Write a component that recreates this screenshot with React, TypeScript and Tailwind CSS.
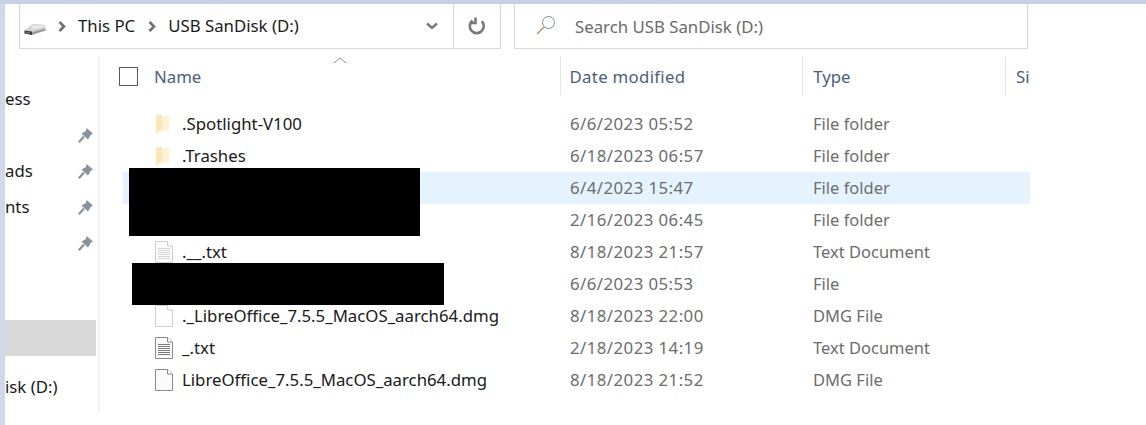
const DriveIcon = () => (
    <svg width="22" height="12" viewBox="0 0 22 12" className="shrink-0">
        <path d="M0.5 7.5 L7 2 Q8 1 10 1 L19 1.5 Q21.5 2 21.5 4 L21.5 7 L6 11.5 L0.5 10.5 Z" fill="#d4d4d4" />
        <path d="M7 3 L19 2.5 L20 4 L9 6 Z" fill="#ececec" />
        <path d="M8 9 L21.5 5.5 L21.5 7.5 L8 12 Z" fill="#9a9a9a" />
        <path d="M0.5 7.5 L8 8.5 L8 12 L0.5 10.5 Z" fill="#3f3f3f" />
        <path d="M2.5 9 L5.5 9.5 L5.5 10.5 L2.5 10 Z" fill="#6fa86f" />
    </svg>
);

const Crumb = () => (
    <svg width="8" height="11" viewBox="0 0 8 11" className="shrink-0">
        <path d="M1.5 1 L6 5.5 L1.5 10" fill="none" stroke="#707070" strokeWidth="2.6" />
    </svg>
);

const PinIcon = () => (
    <svg width="15" height="15" viewBox="0 0 15 15">
        <path d="M8.5 0 L15 5.5 L13 6.5 L10 11.5 L3.5 5.5 L8 3 Z" fill="#87929c" />
        <path d="M6 8.5 L0.8 14.2" stroke="#87929c" strokeWidth="2.2" />
    </svg>
);

const FolderIcon = () => (
    <svg width="15" height="21" viewBox="0 0 15 21">
        <path d="M1 1 L7 1 L7 16 L1 20 Z" fill="#f9e9b6" />
        <path d="M7 2 L14 2 L14 17 L1 17 L1 16 L7 16 Z" fill="#fdf3d2" />
    </svg>
);

const DocIcon = ({ dark, lines }: { dark: boolean; lines: boolean }) => {
    const stroke = dark ? '#8a8a8a' : '#d0d0d0';
    return (
        <svg width="18" height="22" viewBox="0 0 18 22">
            <path d="M0.5 0.5 H12.5 L17.5 5 V21.5 H0.5 Z" fill={dark ? '#fbfbfb' : '#fdfdfd'} stroke={stroke} />
            <path d="M12.5 0.5 V5 H17.5" fill="#fff" stroke={stroke} />
            {lines && [7, 9, 11, 13, 15, 17].map((y) => (
                <path key={y} d={`M3 ${y + 0.5} H15`} stroke={dark ? '#7a7a7a' : '#d4d4d4'} />
            ))}
        </svg>
    );
};

interface FileRow {
    name: string;
    date: string;
    type: string;
    kind: 'folder' | 'ghostText' | 'ghostFile' | 'text' | 'file' | 'none';
}

const rows: FileRow[] = [
    { name: '.Spotlight-V100', date: '6/6/2023 05:52', type: 'File folder', kind: 'folder' },
    { name: '.Trashes', date: '6/18/2023 06:57', type: 'File folder', kind: 'folder' },
    { name: '', date: '6/4/2023 15:47', type: 'File folder', kind: 'none' },
    { name: '', date: '2/16/2023 06:45', type: 'File folder', kind: 'none' },
    { name: '.__.txt', date: '8/18/2023 21:57', type: 'Text Document', kind: 'ghostText' },
    { name: '', date: '6/6/2023 05:53', type: 'File', kind: 'none' },
    { name: '._LibreOffice_7.5.5_MacOS_aarch64.dmg', date: '8/18/2023 22:00', type: 'DMG File', kind: 'ghostFile' },
    { name: '_.txt', date: '2/18/2023 14:19', type: 'Text Document', kind: 'text' },
    { name: 'LibreOffice_7.5.5_MacOS_aarch64.dmg', date: '8/18/2023 21:52', type: 'DMG File', kind: 'file' },
];

const RowIcon = ({ kind }: { kind: FileRow['kind'] }) => {
    if (kind === 'folder') return <FolderIcon />;
    if (kind === 'ghostText') return <DocIcon dark={false} lines />;
    if (kind === 'ghostFile') return <DocIcon dark={false} lines={false} />;
    if (kind === 'text') return <DocIcon dark lines />;
    if (kind === 'file') return <DocIcon dark lines={false} />;
    return null;
};

export default function App() {
    return (
        <div className="relative w-[1146px] h-[425px] overflow-hidden bg-white flex flex-col text-[16.8px] font-['Noto_Sans','Open_Sans',sans-serif] text-[#1a1a1a]">
            <div className="h-[4px] shrink-0 bg-[#c5d1e4]" />
            <div className="flex flex-1 min-h-0">
                <div className="w-[5px] shrink-0 bg-[#cfd9e9]" />
                <div className="flex-1 min-w-0 flex flex-col">
                    {/* Address and search */}
                    <div className="h-[45px] shrink-0 flex pl-[14px]">
                        <div className="w-[482px] flex items-center border-r border-b border-l border-[#d9d9d9] pl-[4px]">
                            <div className="flex items-center pt-[6px]"><DriveIcon /></div>
                            <div className="ml-[12px]"><Crumb /></div>
                            <span className="ml-[12px]">This PC</span>
                            <div className="ml-[13px]"><Crumb /></div>
                            <span className="ml-[12px]">USB SanDisk (D:)</span>
                            <div className="ml-auto mr-[15px]">
                                <svg width="12" height="8" viewBox="0 0 12 8">
                                    <path d="M1 1.5 L6 6 L11 1.5" fill="none" stroke="#777" strokeWidth="2.4" />
                                </svg>
                            </div>
                            <div className="h-full w-[47px] border-l border-[#d9d9d9] flex items-center justify-center">
                                <svg width="18" height="18" viewBox="0 0 18 18">
                                    <path d="M13.8 4.2 A7 7 0 1 1 4.5 3.6" fill="none" stroke="#787878" strokeWidth="2.6" />
                                    <path d="M7.5 0.6 V6 H2" fill="none" stroke="#787878" strokeWidth="2.6" />
                                </svg>
                            </div>
                        </div>
                        <div className="ml-[13px] w-[514px] flex items-center border-r border-b border-l border-[#d9d9d9] pl-[21px] text-[#6b6b6b]">
                            <svg width="20" height="20" viewBox="0 0 20 20" className="shrink-0 mb-[3px]">
                                <circle cx="12.5" cy="7.5" r="6" fill="none" stroke="#7f8a94" strokeWidth="1" />
                                <path d="M8 12 L1 19" stroke="#b98a6a" strokeWidth="1.2" />
                            </svg>
                            <span className="ml-[19px] pt-[1px]">Search USB SanDisk (D:)</span>
                        </div>
                    </div>
                    <div className="flex flex-1 min-h-0">
                        {/* Navigation pane */}
                        <div className="w-[95px] h-[356px] mt-[7px] shrink-0 border-r-2 border-[#f3f3f3] flex flex-col pr-[2px]">
                            <div className="h-[36px] mt-[25px] flex items-center leading-none whitespace-nowrap">ess</div>
                            <div className="h-[36px] flex items-center justify-end pr-[3px]"><PinIcon /></div>
                            <div className="h-[36px] flex items-center justify-between pr-[3px]">ads<PinIcon /></div>
                            <div className="h-[36px] flex items-center justify-between pr-[3px]">nts<PinIcon /></div>
                            <div className="h-[36px] flex items-center justify-end pr-[3px]"><PinIcon /></div>
                            <div className="h-[36px] mt-[59px] bg-[#d9d9d9]" />
                            <div className="h-[36px] mt-[13px] flex items-center whitespace-nowrap">isk (D:)</div>
                        </div>
                        {/* Details view */}
                        <div className="w-[930px] flex flex-col relative">
                            <div className="h-[40px] mt-[7px] shrink-0 flex items-center text-[#4c607a]">
                                <div className="w-[19px] h-[19px] ml-[19px] border border-[#5a5a5a] bg-white shrink-0" />
                                <div className="w-[423px] h-full flex items-center pl-[16px] pt-[2px] border-r border-[#e5e5e5]">Name</div>
                                <div className="w-[243px] h-full flex items-center pl-[9px] pt-[2px] border-r border-[#e5e5e5] tracking-[0.3px]">Date modified</div>
                                <div className="w-[203px] h-full flex items-center pl-[10px] pt-[2px] border-r border-[#e5e5e5]">Type</div>
                                <div className="w-[24px] h-full flex items-center pl-[10px] pt-[2px] overflow-hidden">Si</div>
                            </div>
                            <svg width="14" height="7" viewBox="0 0 14 7" className="absolute left-[233px] top-[8px]">
                                <path d="M1 6 L7 1 L13 6" fill="none" stroke="#8a8a8a" />
                            </svg>
                            <div className="mt-[12px] flex flex-col pl-[23px]">
                                {rows.map((row, i) => (
                                    <div key={row.date} className={`h-[32px] flex items-center ${i === 2 ? 'bg-[#e5f3ff]' : ''}`}>
                                        <div className="w-[59px] shrink-0 pl-[32px] flex items-center"><RowIcon kind={row.kind} /></div>
                                        <div className="w-[388px] shrink-0 whitespace-nowrap">{row.name}</div>
                                        <div className="w-[243px] shrink-0 text-[#6d6d6d] tracking-[0.45px]">{row.date}</div>
                                        <div className="text-[#6d6d6d] text-[16.5px]">{row.type}</div>
                                    </div>
                                ))}
                            </div>
                            {/* redactions over the rows */}
                            <div className="absolute left-[29px] top-[119px] w-[291px] h-[68px] bg-black" />
                            <div className="absolute left-[32px] top-[214px] w-[312px] h-[42px] bg-black" />
                        </div>
                    </div>
                </div>
            </div>
        </div>
    );
}
